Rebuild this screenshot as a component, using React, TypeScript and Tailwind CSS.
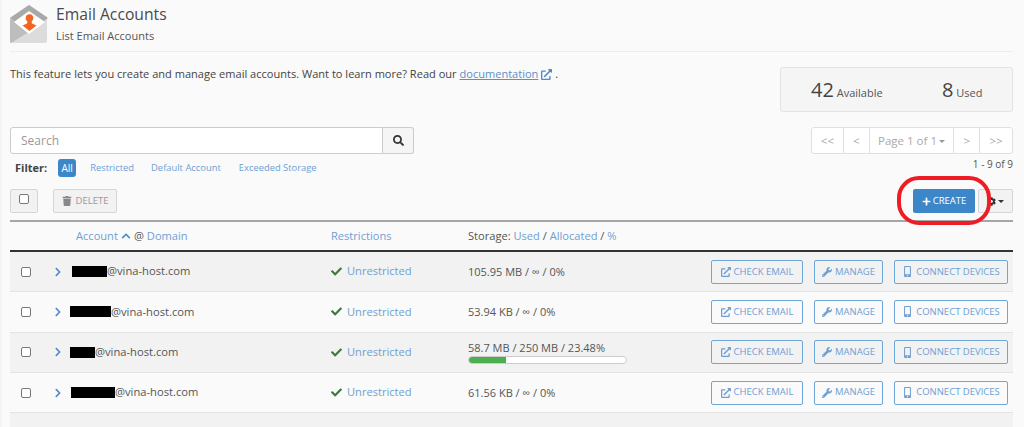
import React from 'react';
import { FaCheck, FaChevronRight, FaChevronUp, FaCog, FaExternalLinkAlt, FaMobileAlt, FaPlus, FaSearch, FaTrash, FaWrench } from 'react-icons/fa';

const rows = [
    { mask: 'w-[35px] ml-[1px]', storage: '105.95 MB / ∞ / 0%', bar: false },
    { mask: 'w-[41px] ml-[-1px]', storage: '53.94 KB / ∞ / 0%', bar: false },
    { mask: 'w-[25px] ml-[-1px]', storage: '58.7 MB / 250 MB / 23.48%', bar: true },
    { mask: 'w-[44px]', storage: '61.56 KB / ∞ / 0%', bar: false },
];

const EnvelopeLogo = () => (
    <svg width="38" height="38" viewBox="0 0 38 38" className="shrink-0">
        <path d="M1 12 L19 0 L37 12 L37 36 Q37 38 35 38 L3 38 Q0 38 0 36 L0 13 Z" fill="#dcdcdc" />
        <path d="M0 13 L19 0 L38 13 L19 27 Z" fill="#a9a9a9" />
        <path d="M0 13 L19 27 L1 38 Q0 38 0 36 Z" fill="#bdbdbd" />
        <path d="M19 6 L35 17 L19 29 L4 17 Z" fill="#ffffff" />
        <circle cx="19.5" cy="13" r="3.8" fill="#f26522" />
        <path d="M17.5 16 L21.5 16 L22 18.5 L26.5 20.5 L19.5 26 L12.5 20.5 L17 18.5 Z" fill="#f26522" />
    </svg>
);

const ActionButton = ({ icon, label, width }: { icon: React.ReactNode; label: string; width: string }) => (
    <button className={`${width} h-[24px] flex items-center justify-center gap-[3px] border border-[#6ea6da] rounded-[2px] text-[#6f9fd3] text-[9.5px] bg-transparent`}>
        {icon}
        <span>{label}</span>
    </button>
);

const PageButton = ({ label, width }: { label: React.ReactNode; width: string }) => (
    <div className={`${width} h-full flex items-center justify-center border-r border-[#e0e0e0] last:border-r-0 text-[#aaaaaa]`}>{label}</div>
);

const App: React.FC = () => {
    return (
        <div className="w-[1024px] h-[427px] overflow-hidden bg-[#fafafa] border-l-2 border-[#f4f4f4] text-[#444444] text-[11px] font-['Open_Sans',sans-serif] relative">
            <div className="pl-[8px] pr-[11px]">
                <div className="flex h-[52px] pt-[5px] border-b border-[#eeeeee]">
                    <EnvelopeLogo />
                    <div className="ml-[8px]">
                        <div className="text-[15.7px] leading-[18px] text-[#4a4a4a]">Email Accounts</div>
                        <div className="text-[11px] leading-[16px] mt-[5px] text-[#555555]">List Email Accounts</div>
                    </div>
                </div>

                <div className="flex justify-between h-[75px]">
                    <p className="mt-[14px] text-[11.05px] leading-[16px]">
                        This feature lets you create and manage email accounts. Want to learn more? Read our{' '}
                        <a className="text-[#5b8fc9] underline">documentation</a>{' '}
                        <FaExternalLinkAlt className="inline text-[#4f8ac9] text-[11px] mb-[2px]" /> .
                    </p>
                    <div className="mt-[15px] w-[233px] h-[45px] bg-[#f5f5f5] border border-[#e3e3e3] rounded-[3px] flex items-center">
                        <div className="ml-[30px] w-[131px]"><span className="text-[20px]">42</span> <span className="text-[11px] text-[#555555]">Available</span></div>
                        <div><span className="text-[20px]">8</span> <span className="text-[11px] text-[#555555]">Used</span></div>
                    </div>
                </div>

                <div className="flex justify-between h-[27px]">
                    <div className="flex w-[404px]">
                        <div className="w-[373px] bg-white border border-[#cccccc] rounded-l-[3px] px-[10px] pt-[1px] flex items-center text-[12px] text-[#999999]">Search</div>
                        <div className="w-[31px] bg-[#f5f5f5] border border-l-0 border-[#cccccc] rounded-r-[3px] flex items-center justify-center text-[#333333] text-[11px]"><FaSearch /></div>
                    </div>
                    <div className="flex w-[202px] h-[27px] bg-white border border-[#e0e0e0] rounded-[3px] text-[11.5px]">
                        <PageButton label="<<" width="w-[32px]" />
                        <PageButton label="<" width="w-[26px]" />
                        <PageButton label={<span>Page 1 of 1<span className="inline-block align-middle ml-[2px] w-0 h-0 border-x-[3px] border-x-transparent border-t-[3px] border-t-[#999999]" /></span>} width="w-[85px]" />
                        <PageButton label=">" width="w-[26px]" />
                        <PageButton label=">>" width="w-[32px]" />
                    </div>
                </div>

                <div className="flex justify-between h-[35px]">
                    <div className="flex items-center h-[18px] mt-[5px] text-[9.4px] text-[#6f9fd3]">
                        <span className="ml-[5px] text-[11px] font-bold text-[#444444]">Filter:</span>
                        <span className="ml-[11px] w-[18px] h-[18px] rounded-[3px] bg-[#3d87c9] text-[10px] text-white flex items-center justify-center">All</span>
                        <span className="ml-[14px]">Restricted</span>
                        <span className="ml-[17px]">Default Account</span>
                        <span className="ml-[18px]">Exceeded Storage</span>
                    </div>
                    <div className="text-[10px] text-[#555555] leading-[14px] mt-[3px]">1 - 9 of 9</div>
                </div>

                <div className="flex items-start h-[33px] border-b-2 border-[#a6a6a6]">
                    <div className="w-[28px] h-[24px] bg-[#f2f2f2] border border-[#d5d5d5] rounded-[2px] flex justify-center pt-[4px]">
                        <div className="w-[10px] h-[10px] bg-white border border-[#777777] rounded-[2px]" />
                    </div>
                    <div className="ml-[15px] w-[64px] h-[24px] bg-[#f2f2f2] border border-[#d5d5d5] rounded-[2px] flex items-center justify-center gap-[4px] text-[9.5px] text-[#999999]">
                        <FaTrash className="text-[10px] text-[#888888]" />
                        <span>DELETE</span>
                    </div>
                    <div className="ml-auto w-[62px] h-[24px] bg-[#3d87c9] rounded-[2px] flex items-center justify-center gap-[2px] text-[9.5px] text-white">
                        <FaPlus className="text-[9px]" />
                        <span>CREATE</span>
                    </div>
                    <div className="ml-[3px] w-[35px] h-[24px] bg-[#f2f2f2] border border-[#d5d5d5] rounded-[2px] flex items-center justify-center gap-[2px] text-[#333333]">
                        <FaCog className="text-[9px]" />
                        <span className="w-0 h-0 border-x-[3px] border-x-transparent border-t-[3px] border-t-[#333333]" />
                    </div>
                </div>

                <div className="flex items-center h-[30px] border-b-2 border-[#333333] text-[11.1px] text-[#6f9fd3]">
                    <div className="ml-[66px] w-[255px] flex items-center">
                        <span>Account</span>
                        <FaChevronUp className="mx-[3px] text-[10px] text-[#4f8ac9]" />
                        <span className="text-[#555555]">@</span>
                        <span className="ml-[3px]">Domain</span>
                    </div>
                    <div className="w-[137px]">Restrictions</div>
                    <div><span className="text-[#555555]">Storage:</span> Used <span className="text-[#555555]">/</span> Allocated <span className="text-[#555555]">/</span> %</div>
                </div>

                {[...rows, null].map((row, i) => (
                    <div key={i} className={`flex items-center h-[40.3px] border-b border-[#e3e3e3] ${i % 2 === 0 ? 'bg-[#f2f2f2]' : 'bg-[#fafafa]'}`}>
                        {row && (
                            <>
                                <div className="ml-[11px] w-[10px] h-[10px] bg-white border border-[#777777] rounded-[2px]" />
                                <FaChevronRight className="ml-[22px] text-[10px] text-[#4f8ac9]" />
                                <div className="ml-[8px] w-[260px] flex items-center text-[11.2px] text-[#555555]">
                                    <span className={`${row.mask} h-[11px] bg-black`} />
                                    <span>@vina-host.com</span>
                                </div>
                                <div className="w-[137px] flex items-center text-[11.1px] text-[#6f9fd3]">
                                    <FaCheck className="text-[11px] text-[#3d7a3d] mr-[5px]" />
                                    <span>Unrestricted</span>
                                </div>
                                <div className="w-[243px] text-[11px] text-[#555555]">
                                    <div className="leading-[14px]">{row.storage}</div>
                                    {row.bar && (
                                        <div className="mt-[1px] w-[159px] h-[8px] bg-white border border-[#cccccc] rounded-full overflow-hidden">
                                            <div className="w-[23.48%] h-full bg-[#4cae4f]" />
                                        </div>
                                    )}
                                </div>
                                <ActionButton icon={<FaExternalLinkAlt className="text-[10px]" />} label="CHECK EMAIL" width="w-[92px]" />
                                <div className="w-[11px]" />
                                <ActionButton icon={<FaWrench className="text-[10px]" />} label="MANAGE" width="w-[69px]" />
                                <div className="w-[11px]" />
                                <ActionButton icon={<FaMobileAlt className="text-[11px]" />} label="CONNECT DEVICES" width="w-[114px]" />
                            </>
                        )}
                    </div>
                ))}
            </div>

            <div className="absolute left-[895px] top-[176px] w-[94px] h-[49px] border-[4px] border-[#ee1c25] rounded-[22px]" />
        </div>
    );
};

export default App;
